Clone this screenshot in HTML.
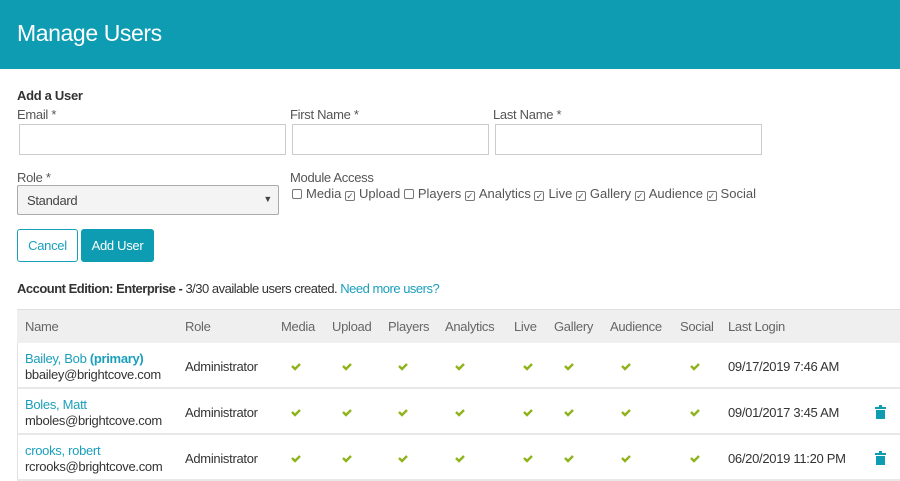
<!DOCTYPE html>
<html><head><meta charset="utf-8"><style>
*{box-sizing:border-box;margin:0;padding:0}
body{width:900px;height:469px;overflow:hidden;background:#fff;font-family:"Liberation Sans",sans-serif;color:#333;position:relative;font-size:13px;letter-spacing:-0.3px}
.a{position:absolute;white-space:nowrap}
.hdr{position:absolute;left:0;top:0;width:900px;height:69px;background:#0e9cb3}
.hdr span{position:absolute;left:17px;top:20px;color:#fff;font-size:23px;letter-spacing:-0.4px}
.inp{position:absolute;border:1px solid #ccc;background:#fff;height:32px}
.lbl{color:#555}
.cb{display:inline-block;width:10px;height:10px;border:1px solid #777;border-radius:2px;vertical-align:-1px;margin-right:4px;position:relative;font-size:9px;line-height:8px;text-align:center}
.th{position:absolute;top:309px;height:34px;left:17px;width:883px;background:#efefef;border-top:1px solid #e0e0e0}
.row{position:absolute;left:17px;width:883px;border-bottom:2px solid #e8e8e8;border-left:1px solid #e0e0e0}
.hc{color:#666;top:319px}
.lnk{color:#1a9fbb}
</style></head><body>
<div class="hdr"><span>Manage Users</span></div>
<div class="a" style="left:17px;top:88px;font-weight:bold;color:#333">Add a User</div>
<div class="a lbl" style="left:17px;top:107px">Email *</div>
<div class="a lbl" style="left:290px;top:107px">First Name *</div>
<div class="a lbl" style="left:493px;top:107px">Last Name *</div>
<div class="inp" style="left:19px;top:124px;width:267px;height:31px"></div>
<div class="inp" style="left:292px;top:124px;width:197px;height:31px"></div>
<div class="inp" style="left:495px;top:124px;width:267px;height:31px"></div>
<div class="a lbl" style="left:17px;top:170px">Role *</div>
<div class="a" style="left:17px;top:185px;width:262px;height:30px;border:1px solid #aaa;background:#f4f4f4;border-radius:2px"><span class="a" style="left:9px;top:7px;color:#444">Standard</span><span class="a" style="right:6px;top:8px;font-size:9px;color:#444">▼</span></div>
<div class="a lbl" style="left:290px;top:170px">Module Access</div>
<div class="a lbl" style="left:292px;top:186px;letter-spacing:0"><span class="cb"></span>Media <span class="cb">✓</span>Upload <span class="cb"></span>Players <span class="cb">✓</span>Analytics <span class="cb">✓</span>Live <span class="cb">✓</span>Gallery <span class="cb">✓</span>Audience <span class="cb">✓</span>Social</div>
<div class="a" style="left:17px;top:229px;width:61px;height:33px;border:1px solid #1a9fbb;border-radius:3px;color:#1a9fbb;text-align:center;line-height:31px">Cancel</div>
<div class="a" style="left:81px;top:229px;width:73px;height:33px;background:#0e9cb3;border-radius:3px;color:#fff;text-align:center;line-height:33px">Add User</div>
<div class="a" style="left:17px;top:281px;letter-spacing:-0.5px"><b>Account Edition: Enterprise -</b> 3/30 available users created. <span class="lnk">Need more users?</span></div>
<div class="th"></div>
<div class="a hc" style="left:25px">Name</div><div class="a hc" style="left:185px">Role</div><div class="a hc" style="left:281px">Media</div><div class="a hc" style="left:332px">Upload</div><div class="a hc" style="left:388px">Players</div><div class="a hc" style="left:445px">Analytics</div><div class="a hc" style="left:514px">Live</div><div class="a hc" style="left:554px">Gallery</div><div class="a hc" style="left:610px">Audience</div><div class="a hc" style="left:680px">Social</div><div class="a hc" style="left:728px">Last Login</div>
<div class="row" style="top:343px;height:46px"></div>
<div class="row" style="top:389px;height:46px"></div>
<div class="row" style="top:435px;height:46px"></div>
<div class="a lnk" style="left:25px;top:351px">Bailey, Bob <b>(primary)</b></div><div class="a" style="left:25px;top:367px">bbailey@brightcove.com</div>
<div class="a lnk" style="left:25px;top:397px">Boles, Matt</div><div class="a" style="left:25px;top:413px">mboles@brightcove.com</div>
<div class="a lnk" style="left:25px;top:443px">crooks, robert</div><div class="a" style="left:25px;top:459px">rcrooks@brightcove.com</div>
<div class="a" style="left:185px;top:359px">Administrator</div><div class="a" style="left:185px;top:405px">Administrator</div><div class="a" style="left:185px;top:451px">Administrator</div>
<div class="a" style="left:728px;top:359px">09/17/2019 7:46 AM</div><div class="a" style="left:728px;top:405px">09/01/2017 3:45 AM</div><div class="a" style="left:728px;top:451px">06/20/2019 11:20 PM</div>
<svg class="a" style="left:0;top:0" width="900" height="469">
<g fill="#0e9cb3"><path d="M875 407h11v2h-11zM879 405h3v2h-3zM876 410h9v9h-9z"/><path d="M875 453h11v2h-11zM879 451h3v2h-3zM876 456h9v9h-9z"/></g>
<g fill="none" stroke="#8fb31a" stroke-width="2.4">
<path d="M292 366l3 3 5-5M343 366l3 3 5-5M399 366l3 3 5-5M456 366l3 3 5-5M524 366l3 3 5-5M565 366l3 3 5-5M622 366l3 3 5-5M691 366l3 3 5-5"/>
<path transform="translate(0 46)" d="M292 366l3 3 5-5M343 366l3 3 5-5M399 366l3 3 5-5M456 366l3 3 5-5M524 366l3 3 5-5M565 366l3 3 5-5M622 366l3 3 5-5M691 366l3 3 5-5"/>
<path transform="translate(0 92)" d="M292 366l3 3 5-5M343 366l3 3 5-5M399 366l3 3 5-5M456 366l3 3 5-5M524 366l3 3 5-5M565 366l3 3 5-5M622 366l3 3 5-5M691 366l3 3 5-5"/>
</g></svg>
</body></html>
